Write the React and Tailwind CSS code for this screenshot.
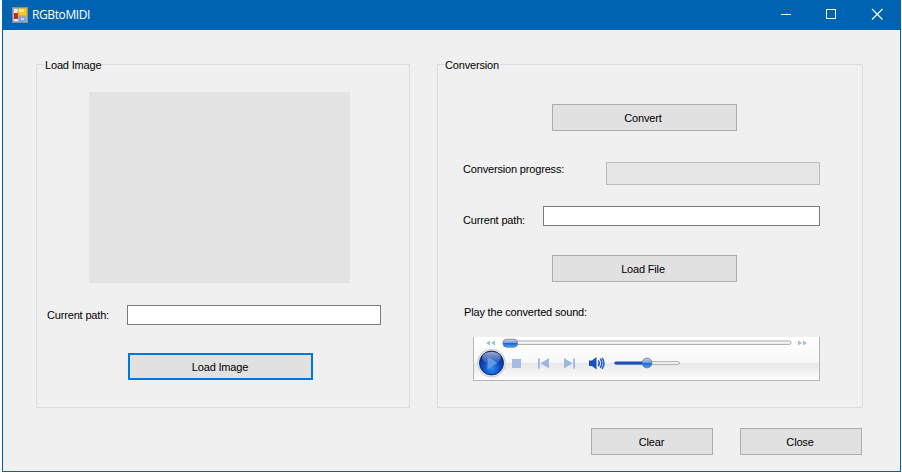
const labelFont = "font-['Liberation_Sans',Arial,sans-serif] text-[11px] tracking-[-0.17px] text-black";

function Btn({ children, className = "" }) {
  return (
    <button className={`w-[185px] h-[27px] shrink-0 pt-[1px] bg-[#e1e1e1] border border-[#adadad] flex items-center justify-center ${labelFont} ${className}`}>
      {children}
    </button>
  );
}

function Field({ className = "" }) {
  return <div className={`h-[20px] bg-white border border-[#7a7a7a] shrink-0 ${className}`} />;
}

function Group({ title, className = "", legendClass = "", children }) {
  return (
    <section className={`relative h-[344px] shrink-0 border border-[#dcdcdc] ${className}`}>
      <span className={`absolute -top-[7px] bg-[#f0f0f0] px-[1px] leading-[14px] ${labelFont} ${legendClass}`}>{title}</span>
      {children}
    </section>
  );
}

function AppIcon() {
  return (
    <svg width="16" height="16" viewBox="0 0 16 16" className="shrink-0">
      <rect x="0.5" y="0.5" width="15" height="15" fill="#9fb1c4" stroke="#8a8f96" />
      <rect x="2" y="2" width="4" height="12" fill="#e9edf1" />
      <rect x="2" y="6" width="4" height="6" fill="#c9261e" />
      <rect x="6" y="1" width="9" height="8" fill="#f7c531" stroke="#c8901c" strokeWidth="0.6" />
      <rect x="7" y="2" width="5" height="3" fill="#fde88f" />
      <rect x="7" y="10" width="7" height="5" fill="#7ba4e8" />
      <rect x="9" y="11" width="3" height="2" fill="#c4d8f8" />
    </svg>
  );
}

function Player() {
  return (
    <div className="ml-[35px] mt-[18px] w-[347px] h-[44px] bg-white border-x border-b border-[#b5b5b5] overflow-hidden">
      <svg width="345" height="43" viewBox="474 337 345 43" className="block">
        <defs>
          <linearGradient id="band" x1="0" y1="0" x2="0" y2="1">
            <stop offset="0" stopColor="#ffffff" />
            <stop offset="0.58" stopColor="#f8f8f8" />
            <stop offset="0.62" stopColor="#e8e8e8" />
            <stop offset="1" stopColor="#fdfdfd" />
          </linearGradient>
          <radialGradient id="orb" cx="0.5" cy="0.72" r="0.7">
            <stop offset="0" stopColor="#2f8cf2" />
            <stop offset="0.55" stopColor="#0c47bb" />
            <stop offset="1" stopColor="#06237c" />
          </radialGradient>
          <linearGradient id="thumb" x1="0" y1="0" x2="0" y2="1">
            <stop offset="0" stopColor="#c9d3e6" />
            <stop offset="0.45" stopColor="#7d9ad0" />
            <stop offset="0.5" stopColor="#1b63d8" />
            <stop offset="1" stopColor="#4da2f5" />
          </linearGradient>
          <linearGradient id="gloss" x1="0" y1="0" x2="0" y2="1">
            <stop offset="0" stopColor="#ffffff" stopOpacity="0.6" />
            <stop offset="1" stopColor="#ffffff" stopOpacity="0.03" />
          </linearGradient>
          <filter id="soft" x="-5%" y="-5%" width="110%" height="110%">
            <feGaussianBlur stdDeviation="0.3" />
          </filter>
        </defs>
        <rect x="474" y="337" width="345" height="43" fill="url(#band)" />
        <g filter="url(#soft)">
          <path d="M490 340.5v5l-4-2.5zM495 340.5v5l-4-2.5z" fill="#a0bde2" />
          <path d="M798 340.5v5l4-2.5zM803 340.5v5l4-2.5z" fill="#a0bde2" />
          <rect x="503.5" y="341" width="287.5" height="3.4" rx="1.7" fill="#f6f6f6" stroke="#a0a0a0" strokeWidth="0.9" />
          <rect x="503" y="339.2" width="14.5" height="8" rx="3.6" fill="url(#thumb)" stroke="#52709f" strokeWidth="0.7" />

          <circle cx="491.5" cy="363" r="14" fill="#e4e6ea" stroke="#c3c6cc" strokeWidth="0.8" />
          <circle cx="491.5" cy="363" r="12" fill="url(#orb)" stroke="#06195e" strokeWidth="0.8" />
          <ellipse cx="491.5" cy="357.8" rx="9.5" ry="6" fill="url(#gloss)" />
          <path d="M487.5 356.5l10 6.5-10 6.5z" fill="#6f9fe3" fillOpacity="0.85" />

          <rect x="512" y="359" width="9" height="9" fill="#a7bce0" />
          <path d="M538 358.5h1.8v10H538zM549 358v10.5l-8.5-5.2z" fill="#9db8df" />
          <path d="M575 358.5h-1.8v10h1.8zM564 358v10.5l8.5-5.2z" fill="#9db8df" />

          <path d="M589 360.5h3l4.5-3.5v12.5l-4.5-3.5h-3z" fill="#1650c0" />
          <path d="M598.3 360.3q2 3 0 6M600.3 358.8q3.2 4.5 0 9.2M602.2 357.8q3.6 5.6 0 11" fill="none" stroke="#1f5cc6" strokeWidth="1.5" />

          <rect x="614.5" y="361.6" width="65" height="2.8" rx="1.4" fill="#f4f4f4" stroke="#a0a0a0" strokeWidth="0.8" />
          <rect x="614.5" y="361.8" width="32" height="2.6" rx="1.3" fill="#1550c8" />
          <circle cx="647" cy="363" r="4.9" fill="url(#thumb)" stroke="#52709f" strokeWidth="0.7" />
        </g>
      </svg>
    </div>
  );
}

export default function App() {
  return (
    <div className="w-[902px] h-[473px] bg-white overflow-hidden">
      <div className="ml-[2px] w-[899px] h-[472px] flex flex-col bg-[#f0f0f0] border-x border-b border-[#0063b1]">
        <header className="h-[30px] shrink-0 -mx-[1px] bg-[#0063b1] flex items-center pl-[10px] text-white">
          <AppIcon />
          <span className="ml-[4px] font-['Open_Sans',sans-serif] text-[12px] tracking-[-0.4px]">RGBtoMIDI</span>
          <div className="ml-auto flex items-center h-full">
            <svg width="45" height="30" viewBox="0 0 45 30"><rect x="15" y="14" width="10" height="1" fill="#fff" /></svg>
            <svg width="45" height="30" viewBox="0 0 45 30"><rect x="15.5" y="9.5" width="9" height="9" fill="none" stroke="#fff" /></svg>
            <svg width="45" height="30" viewBox="0 0 45 30"><path d="M16 9l10.5 10.5M26.5 9L16 19.5" stroke="#fff" strokeWidth="1.1" /></svg>
          </div>
        </header>

        <main className="flex-1 flex flex-col pl-[33px] pr-[38px] pt-[34px]">
          <div className="flex gap-[27px]">
            <Group title="Load Image" legendClass="left-[7px]" className="w-[374px] flex flex-col">
              <div className="ml-[52px] mt-[27px] w-[261px] h-[191px] bg-[#e3e3e3]" />
              <div className="flex items-center mt-[22px] pl-[10px]">
                <span className={`w-[80px] ${labelFont}`}>Current path:</span>
                <Field className="w-[254px]" />
              </div>
              <Btn className="ml-[91px] mt-[28px] !border-2 !border-[#0078d7] pr-[1px]">Load Image</Btn>
            </Group>

            <Group title="Conversion" legendClass="left-[6px]" className="w-[426px] flex flex-col">
              <Btn className="ml-[114px] mt-[39px] pr-[3px]">Convert</Btn>
              <div className="flex items-center mt-[31px] pl-[25px]">
                <span className={`w-[143px] -mt-[9px] leading-[14px] ${labelFont}`}>Conversion progress:</span>
                <div className="w-[214px] h-[23px] bg-[#e6e6e6] border border-[#bcbcbc]" />
              </div>
              <div className="flex items-center mt-[21px] pl-[25px]">
                <span className={`w-[80px] mt-[9px] leading-[11px] ${labelFont}`}>Current path:</span>
                <Field className="w-[277px]" />
              </div>
              <Btn className="ml-[114px] mt-[29px] pr-[3px]">Load File</Btn>
              <span className={`ml-[26px] mt-[23px] leading-[14px] ${labelFont}`}>Play the converted sound:</span>
              <Player />
            </Group>
          </div>

          <div className="flex justify-end gap-[27px] mt-[20px]">
            <Btn className="!w-[122px] pr-[1px]">Clear</Btn>
            <Btn className="!w-[122px] pr-[2px]">Close</Btn>
          </div>
        </main>
      </div>
    </div>
  );
}
